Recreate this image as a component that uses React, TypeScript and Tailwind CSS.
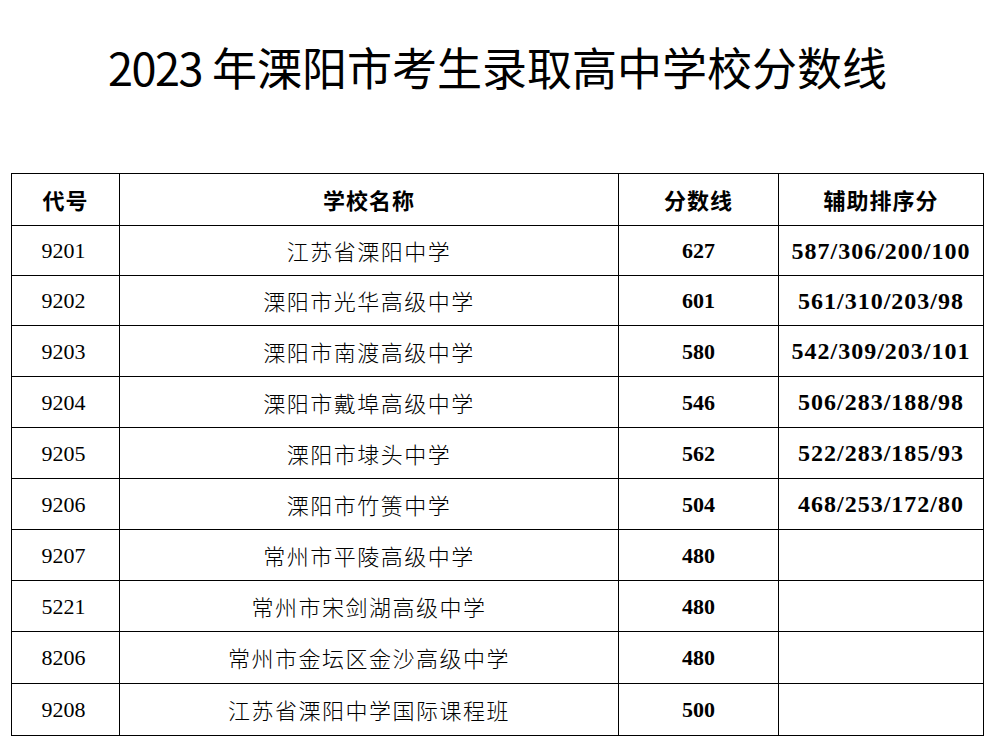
import React from "react";

const rows: [string, string, string, string, string][] = [
  ["9201", "江苏省溧阳中学", "627", "587/306/200/100", "h-[50px]"],
  ["9202", "溧阳市光华高级中学", "601", "561/310/203/98", "h-[50px]"],
  ["9203", "溧阳市南渡高级中学", "580", "542/309/203/101", "h-[51px]"],
  ["9204", "溧阳市戴埠高级中学", "546", "506/283/188/98", "h-[51px]"],
  ["9205", "溧阳市埭头中学", "562", "522/283/185/93", "h-[51px]"],
  ["9206", "溧阳市竹箦中学", "504", "468/253/172/80", "h-[51px]"],
  ["9207", "常州市平陵高级中学", "480", "", "h-[51px]"],
  ["5221", "常州市宋剑湖高级中学", "480", "", "h-[51px]"],
  ["8206", "常州市金坛区金沙高级中学", "480", "", "h-[52px]"],
  ["9208", "江苏省溧阳中学国际课程班", "500", "", "h-[52px]"],
];

const cell = "flex items-center justify-center border-r border-b border-black";

export default function App() {
  return (
    <div className="w-[995px] h-[751px] bg-white overflow-hidden text-black">
      <div
        className="pt-[44px] text-center text-[45px] leading-[45px]"
        style={{ fontFamily: '"Noto Sans CJK SC", sans-serif' }}
      >
        <span className="tracking-[-1.5px]">2023</span> 年溧阳市考生录取高中学校分数线
      </div>
      <div
        className="mt-[84px] ml-[11px] w-[973px] grid grid-cols-[108px_499px_160px_205px] border-l border-t border-black"
        style={{ fontFamily: '"Liberation Serif", "Noto Sans CJK SC", serif' }}
      >
        {["代号", "学校名称", "分数线", "辅助排序分"].map((h) => (
          <div
            key={h}
            className={`${cell} h-[52px] text-[22px] font-bold tracking-[1px]`}
            style={{ fontFamily: '"Noto Sans CJK SC", sans-serif' }}
          >
            {h}
          </div>
        ))}
        {rows.map((r) => (
          <React.Fragment key={r[0]}>
            <div className={`${cell} ${r[4]} text-[22px] pr-[4px]`}>{r[0]}</div>
            <div
              className={`${cell} ${r[4]} text-[22px] font-light tracking-[1.5px]`}
              style={{ fontFamily: '"Noto Sans CJK SC", sans-serif' }}
            >
              {r[1]}
            </div>
            <div className={`${cell} ${r[4]} text-[22px] font-bold`}>{r[2]}</div>
            <div className={`${cell} ${r[4]} text-[24px] font-bold tracking-[1px]`}>{r[3]}</div>
          </React.Fragment>
        ))}
      </div>
    </div>
  );
}
